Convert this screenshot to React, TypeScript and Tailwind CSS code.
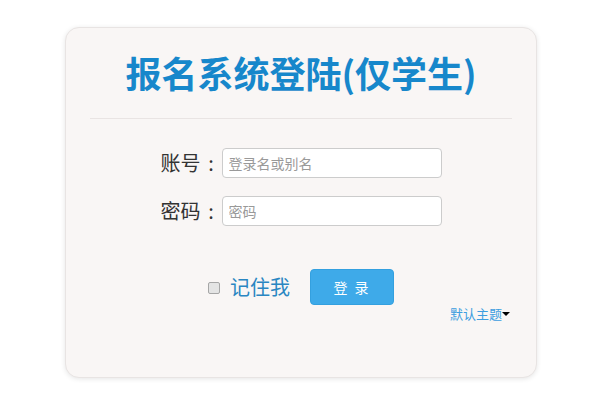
import React from "react";

export default function App() {
  const font = { fontFamily: '"Microsoft YaHei", "Noto Sans CJK SC", "Noto Sans", sans-serif' };
  return (
    <div className="w-[603px] h-[406px] bg-white overflow-hidden" style={font}>
      <div className="mt-[27px] ml-[65px] w-[472px] h-[351px] rounded-[14px] border border-[#e8e4e3] bg-[#f9f6f5] shadow-[0_1px_5px_rgba(0,0,0,0.10)] flex flex-col">
        <div className="h-[90px] flex items-center justify-center pb-[3px]">
          <h1 className="text-[36px] leading-[44px] font-bold text-[#1787cb]">
            报名系统登陆(仅学生)
          </h1>
        </div>
        <div className="mx-[24px] h-px bg-[#e9e4e3]" />
        <div className="mt-[29px] flex flex-col items-center gap-[18px]">
          <div className="flex items-center">
            <span className="w-[40px] text-[20px] leading-[30px] text-[#333]">账号</span>
            <span className="w-[21px] text-center text-[20px] leading-[30px] text-[#333]">:</span>
            <input
              className="w-[220px] h-[30px] rounded-[4px] border border-[#cccccc] bg-white px-[6px] text-[14px] text-[#555] placeholder:text-[#999] outline-none"
              placeholder="登录名或别名"
            />
          </div>
          <div className="flex items-center">
            <span className="w-[40px] text-[20px] leading-[30px] text-[#333]">密码</span>
            <span className="w-[21px] text-center text-[20px] leading-[30px] text-[#333]">:</span>
            <input
              type="password"
              className="w-[220px] h-[30px] rounded-[4px] border border-[#cccccc] bg-white px-[6px] text-[14px] text-[#555] placeholder:text-[#999] outline-none"
              placeholder="密码"
            />
          </div>
        </div>
        <div className="mt-[43px] flex items-center justify-center">
          <span className="w-[12px] h-[12px] rounded-[2px] border border-[#a6a6a6] bg-[#e4e4e4] mt-[2px]" />
          <span className="ml-[10px] text-[20px] leading-[30px] text-[#2a86c2]">记住我</span>
          <button className="ml-[20px] w-[84px] h-[36px] rounded-[4px] border border-[#34a0df] bg-[#3eaae9] text-white text-[14px] tracking-[2px]">
            登 录
          </button>
        </div>
        <div className="mr-[26px] flex items-center justify-end">
          <span className="text-[13px] leading-[18px] text-[#3d9ee0]">默认主题</span>
          <span className="w-0 h-0 border-l-[4px] border-r-[4px] border-t-[4px] border-l-transparent border-r-transparent border-t-black" />
        </div>
      </div>
    </div>
  );
}
